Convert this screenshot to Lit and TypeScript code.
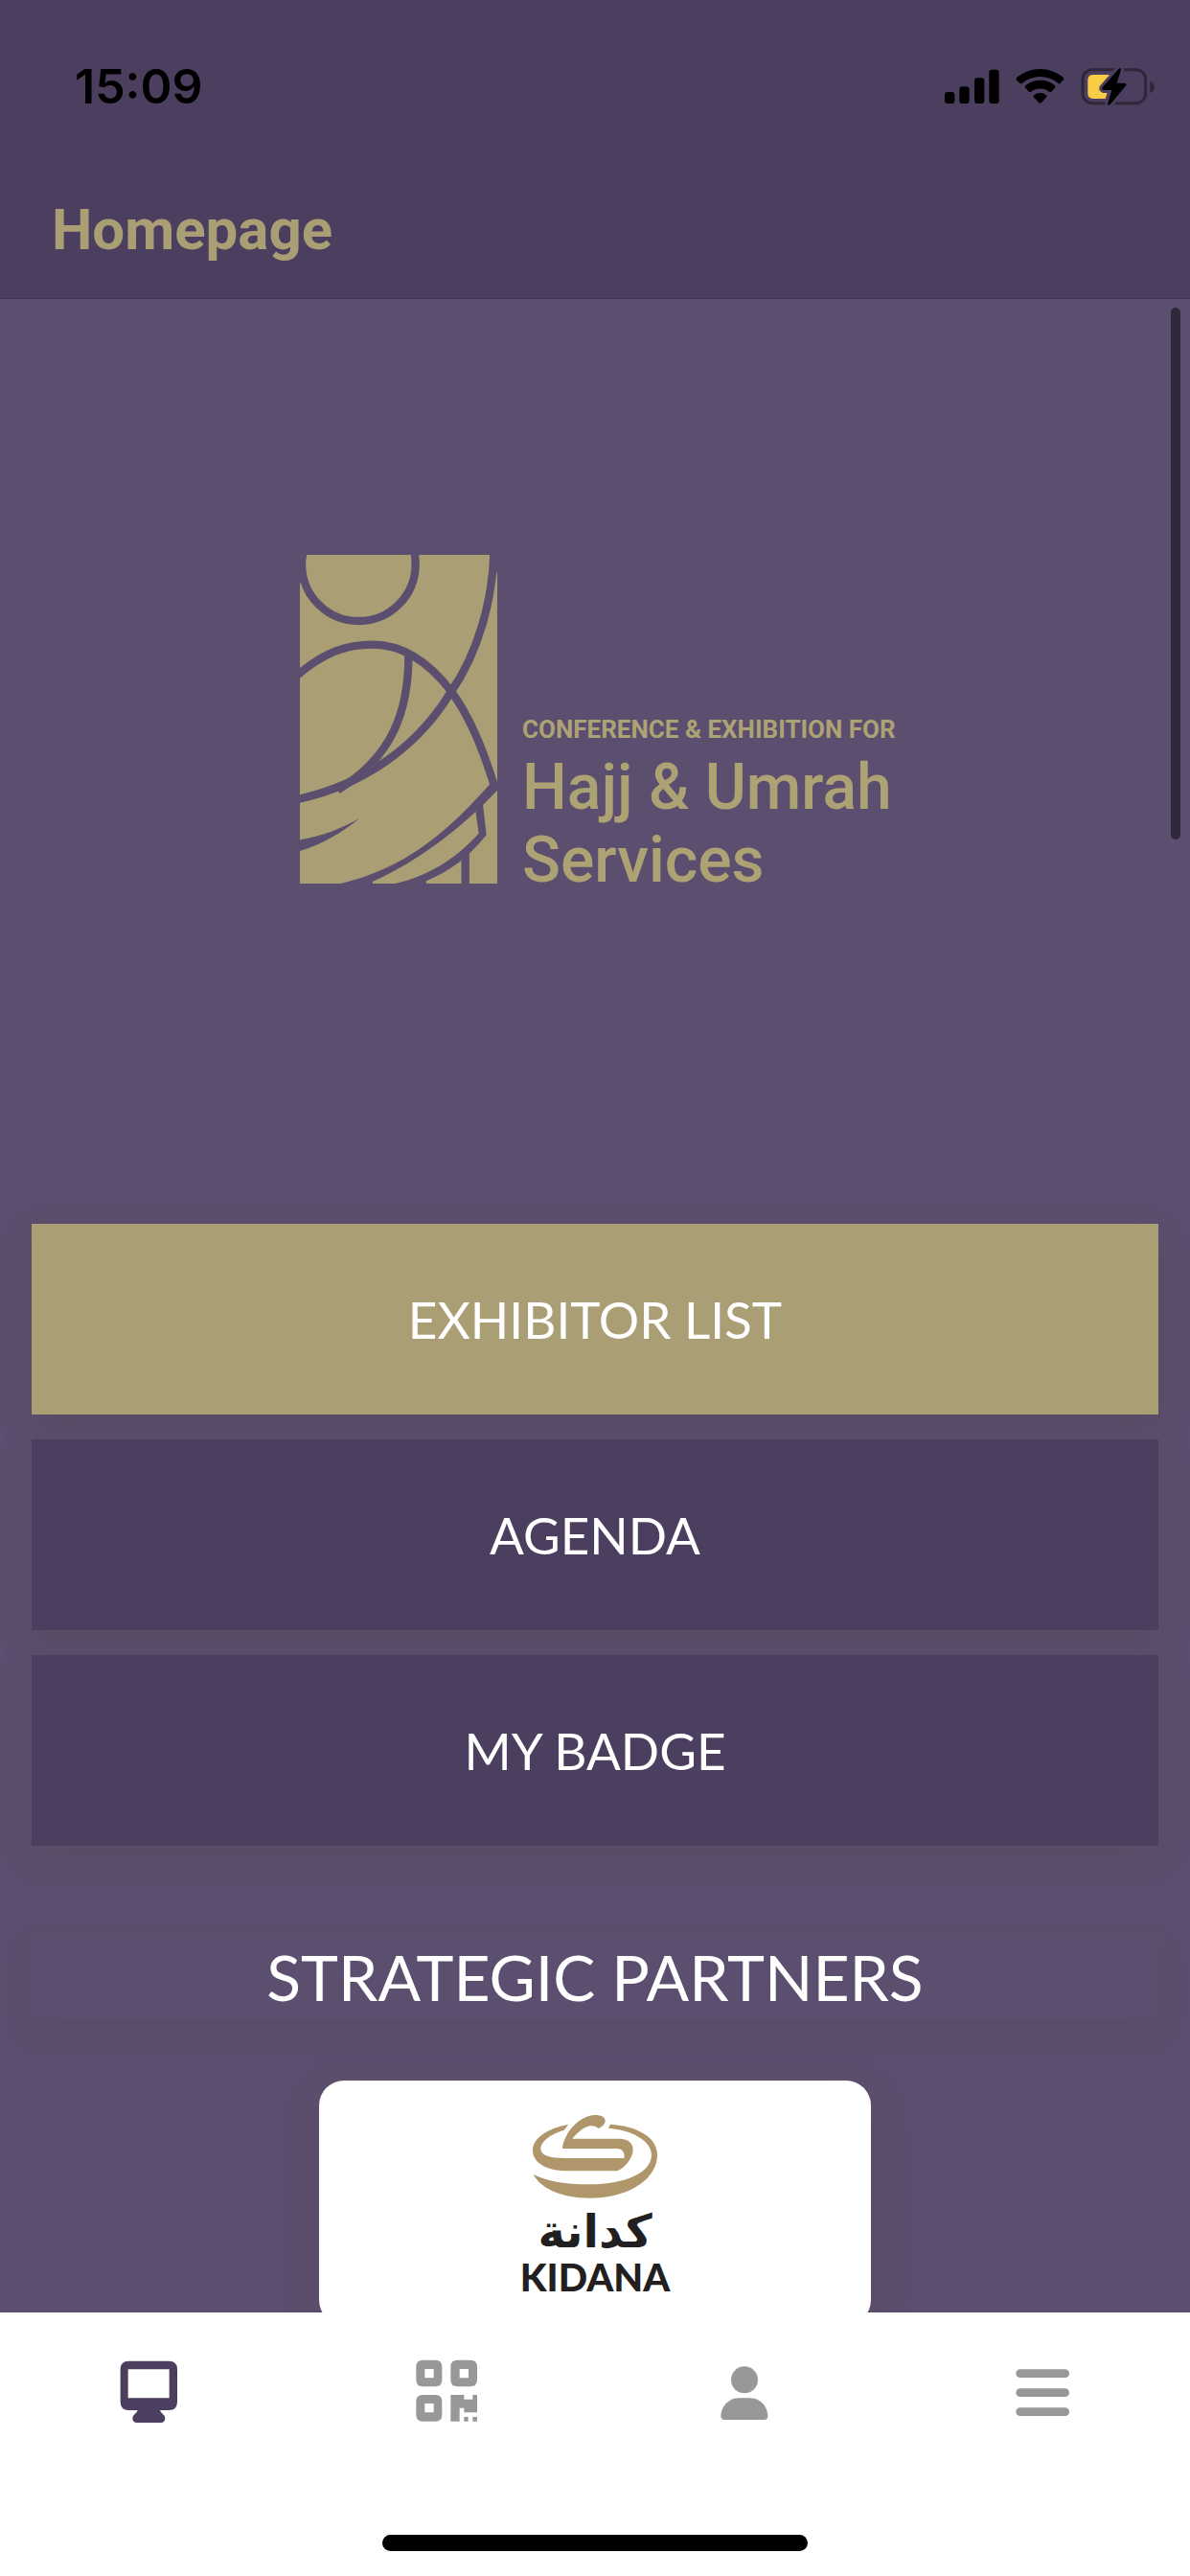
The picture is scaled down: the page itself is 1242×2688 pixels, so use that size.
import { LitElement, html, svg, css } from "lit";
import { customElement, property } from "lit/decorators.js";

type TabName = "home" | "scan" | "profile" | "menu";

const tabs: { name: TabName; label: string }[] = [
  { name: "home", label: "Home" },
  { name: "scan", label: "Scan" },
  { name: "profile", label: "Profile" },
  { name: "menu", label: "Menu" },
];

const tabBoxes: Record<TabName, string> = {
  home: "88 90 216 216",
  scan: "1019 90 216 216",
  profile: "61 90 216 216",
  menu: "992 90 216 216",
};

const tabShapes = {
  home: svg`<path fill-rule="evenodd" d="M134 101H260Q286 101 286 127V229Q286 255 260 255H232Q234 262 240 266Q248 272 248 280Q248 294 234 294H160Q146 294 146 280Q146 272 154 266Q160 262 162 255H134Q108 255 108 229V127Q108 101 134 101ZM132 127V217H261V127Z"/>`,
  scan: svg`<path fill-rule="evenodd" d="M1053 98H1092Q1113 98 1113 119V160Q1113 181 1092 181H1053Q1032 181 1032 160V119Q1032 98 1053 98ZM1059 126V154H1087V126ZM1161 98H1202Q1223 98 1223 119V160Q1223 181 1202 181H1161Q1140 181 1140 160V119Q1140 98 1161 98ZM1168 126V154H1196V126ZM1053 207H1092Q1113 207 1113 228V269Q1113 290 1092 290H1053Q1032 290 1032 269V228Q1032 207 1053 207ZM1059 234V262H1087V234ZM1140 207H1182V221H1209V207H1223V262H1182V248H1168V290H1140ZM1182 276H1195V290H1182ZM1209 276H1223V290H1209Z"/>`,
  profile: svg`<circle cx="172" cy="160" r="42"/><path d="M154 217H190C222 217 245 244 245 274Q245 285 234 285H110Q98 285 98 274C98 244 122 217 154 217Z"/>`,
  menu: svg`<rect x="1020" y="127" width="167" height="26" rx="13"/><rect x="1020" y="187" width="167" height="26" rx="13"/><rect x="1020" y="247" width="167" height="26" rx="13"/>`,
};

@customElement("status-bar")
class StatusBar extends LitElement {
  static styles = css`
    :host {
      display: flex;
      justify-content: space-between;
      align-items: center;
      padding: 60px 36px 0 78px;
      color: #000;
    }
    .time {
      font: 600 50px/60px Inter, sans-serif;
    }
    .signals {
      display: block;
      width: 220px;
      height: 41px;
    }
  `;

  render() {
    return html`
      <span class="time">15:09</span>
      <svg class="signals" viewBox="137 90 660 123" aria-hidden="true">
        <rect x="137" y="168" width="31" height="36" rx="9" />
        <rect x="183" y="151" width="31" height="53" rx="9" />
        <rect x="230" y="124" width="31" height="80" rx="9" />
        <rect x="276" y="98" width="31" height="106" rx="9" />
        <path d="M361 130Q359 126 363 122C405 87 466 87 508 122Q512 126 509 130L499 140Q496 143 492 140C459 113 413 113 379 140Q375 143 372 140Z" />
        <path d="M388 154Q387 151 390 148C417 126 455 126 482 148Q485 151 483 154L471 167Q468 169 464 167C447 154 425 154 407 167Q404 169 401 167Z" />
        <path d="M415 184Q413 181 417 178C428 169 443 169 455 178Q458 181 456 184L439 202Q436 205 432 202Z" />
        <rect x="569" y="98" width="197" height="105" rx="30" fill="none" stroke="#2e2639" stroke-width="9" />
        <path d="M780 134Q793 140 794 152Q793 165 780 171Z" fill="#2e2639" />
        <path d="M602 114H664L640 189H602Q585 189 585 172V131Q585 114 602 114Z" fill="#f7cd46" />
        <path d="M681 96Q689 89 689 99L676 140H701Q709 143 703 149L656 206Q646 213 648 202L660 162H634Q626 159 632 152Z" stroke="#4c3e5e" stroke-width="18" paint-order="stroke" />
      </svg>
    `;
  }
}

@customElement("event-logo")
class EventLogo extends LitElement {
  static styles = css`
    :host {
      display: flex;
      justify-content: center;
      align-items: flex-end;
      gap: 26px;
      color: #ada274;
      font-family: Roboto, sans-serif;
      white-space: nowrap;
    }
    .mark {
      display: block;
      width: 206px;
      height: 343px;
    }
    .words {
      display: flex;
      flex-direction: column;
      width: 384px;
      margin-bottom: -14px;
    }
    .kicker {
      margin-bottom: 8px;
      font-size: 26px;
      line-height: 30px;
      font-weight: 700;
    }
    .name {
      font-size: 66px;
      line-height: 76px;
      font-weight: 500;
    }
  `;

  render() {
    return html`
      <svg class="mark" viewBox="72 58 618 1029" aria-hidden="true">
        <rect x="72" y="58" width="618" height="1029" fill="#a99e74" />
        <path d="M72 58H93L72 150ZM665 58H690V118Z" fill="#5c4e6e" />
        <g fill="none" stroke="#5c4e6e" stroke-width="25">
          <circle cx="256" cy="87" r="178" />
          <path d="M60 438C150 360 220 339 300 339C400 339 480 400 545 484C600 560 640 650 682 785" />
          <path d="M680 40C676 200 630 365 545 487C440 660 270 780 60 824" />
          <path d="M412 365C414 540 365 690 190 794" />
          <path d="M590 985V1090" />
        </g>
        <g fill="#5c4e6e">
          <path d="M668 775L690 770V795C600 890 460 1010 300 1080V1087H200C400 1040 530 930 668 775Z" />
          <path d="M72 950C140 940 200 915 258 884C200 930 140 965 72 985Z" />
          <path d="M645 838L656 935C600 1005 540 1050 465 1080L470 1087H370C470 1065 560 1010 632 930L622 858Z" />
        </g>
      </svg>
      <div class="words">
        <span class="kicker">CONFERENCE &amp; EXHIBITION FOR</span>
        <span class="name">Hajj &amp; Umrah</span>
        <span class="name">Services</span>
      </div>
    `;
  }
}

@customElement("partner-card")
class PartnerCard extends LitElement {
  static styles = css`
    :host {
      display: flex;
      flex-direction: column;
      align-items: center;
      width: 576px;
      padding: 36px 0 28px;
      box-sizing: border-box;
      border-radius: 26px;
      background: #fff;
      box-shadow: 0 12px 40px rgba(88, 72, 88, 0.3);
      color: #221f20;
    }
    .emblem {
      display: block;
      width: 130px;
      height: 87px;
    }
    .arabic {
      margin-top: 8px;
      font: 700 48px/52px "DejaVu Sans", sans-serif;
    }
    .latin {
      font: 900 40px/44px Lato, sans-serif;
    }
  `;

  render() {
    return html`
      <svg class="emblem" viewBox="110 55 390 261" fill="#b0976b" aria-hidden="true">
        <path d="M353 84C440 90 500 125 500 180C500 255 410 315 290 315C200 315 135 285 112 241C160 264 220 273 290 272C400 271 482 235 482 180C482 135 420 102 347 96Z" />
        <path d="M222 84C150 98 110 130 110 165C110 205 155 230 220 230H372C395 226 424 190 424 163C424 140 405 129 380 129H234C245 115 265 95 285 90C300 87 310 92 316 97C330 90 337 82 337 73C337 62 325 55 305 55C270 56 235 85 218 115C210 130 203 148 203 160H372C392 160 400 175 396 190H210C165 190 135 182 135 160C135 138 165 115 208 102Z" />
      </svg>
      <span class="arabic" lang="ar" dir="rtl">كدانة</span>
      <span class="latin">KIDANA</span>
    `;
  }
}

@customElement("tab-bar")
class TabBar extends LitElement {
  @property() current: TabName = "home";

  static styles = css`
    :host {
      display: flex;
      flex-direction: column;
      align-items: center;
      background: #fff;
    }
    .tabs {
      display: grid;
      grid-template-columns: repeat(4, 1fr);
      width: 100%;
    }
    .tab {
      display: flex;
      justify-content: center;
      padding: 47px 0;
      border: 0;
      background: none;
      color: #989898;
    }
    .tab.active {
      color: #4c3e5e;
    }
    .icon {
      display: block;
      width: 72px;
      height: 72px;
      fill: currentColor;
    }
    .indicator {
      width: 444px;
      height: 17px;
      margin: 66px 0 26px;
      border-radius: 9px;
      background: #000;
    }
  `;

  render() {
    return html`
      <nav class="tabs">
        ${tabs.map(
          (tab) => html`
            <button
              class="tab ${tab.name === this.current ? "active" : ""}"
              aria-label=${tab.label}
              @click=${() => (this.current = tab.name)}
            >
              <svg class="icon" viewBox=${tabBoxes[tab.name]} aria-hidden="true">${tabShapes[tab.name]}</svg>
            </button>
          `,
        )}
      </nav>
      <div class="indicator"></div>
    `;
  }
}

@customElement("app-root")
class AppRoot extends LitElement {
  static styles = css`
    :host {
      display: flex;
      flex-direction: column;
      height: 100vh;
      background: #5c4e6e;
      font-family: Lato, sans-serif;
    }
    .header {
      flex: none;
      box-sizing: border-box;
      background: #4c3e5e;
      border-bottom: 1px solid #41345a;
    }
    .title {
      margin: 0;
      padding: 80px 54px 31px;
      color: #a99e74;
      font: 700 60px/80px Roboto, sans-serif;
    }
    .body {
      position: relative;
      display: flex;
      flex: 1;
      min-height: 0;
    }
    .content {
      display: flex;
      flex: 1;
      flex-direction: column;
      align-items: center;
      overflow-y: auto;
      scrollbar-width: none;
    }
    .content > * {
      flex: none;
    }
    .hero {
      padding: 267px 0 355px;
    }
    .actions {
      display: flex;
      flex-direction: column;
      gap: 26px;
      align-self: stretch;
      padding: 0 33px;
    }
    .action {
      height: 199px;
      border: 0;
      background: #4c3e5e;
      box-shadow: 0 12px 30px rgba(88, 72, 88, 0.4);
      color: #fff;
      font: 400 53px/64px Lato, sans-serif;
    }
    .action.primary {
      background: #a99e74;
    }
    .partners {
      align-self: stretch;
      margin: 94px 33px 65px;
      color: #fff;
      font-weight: 400;
      font-size: 66px;
      line-height: 86px;
      text-align: center;
      box-shadow: 0 12px 30px rgba(88, 72, 88, 0.3);
      background: #5c4e6e;
    }
    .thumb {
      position: absolute;
      top: 9px;
      right: 10px;
      width: 10px;
      height: 555px;
      border-radius: 5px;
      background: #2f2838;
    }
  `;

  render() {
    return html`
      <header class="header">
        <status-bar></status-bar>
        <h1 class="title">Homepage</h1>
      </header>
      <div class="body">
        <main class="content">
          <event-logo class="hero"></event-logo>
          <div class="actions">
            <button class="action primary">EXHIBITOR LIST</button>
            <button class="action">AGENDA</button>
            <button class="action">MY BADGE</button>
          </div>
          <h2 class="partners">STRATEGIC PARTNERS</h2>
          <partner-card></partner-card>
        </main>
        <div class="thumb"></div>
      </div>
      <tab-bar></tab-bar>
    `;
  }
}
